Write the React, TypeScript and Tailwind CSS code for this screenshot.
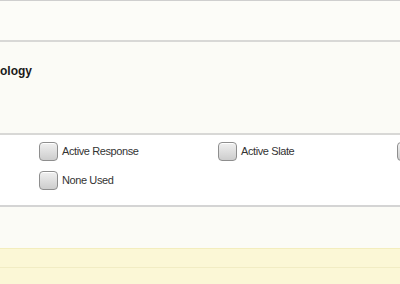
import React from 'react';

const options = [
  ['Active Response', 'Active Slate', ''],
  ['None Used'],
];

function Box() {
  return (
    <span className="block h-[19px] w-[19px] shrink-0 rounded-[4px] border border-[#8e8e8e] bg-gradient-to-b from-[#f0f0f0] to-[#cdcdcd] shadow-[inset_0_1px_0_#fff]" />
  );
}

export default function App() {
  return (
    <div className="h-[284px] w-[400px] overflow-hidden bg-[#fbfbf7] font-['Liberation_Sans',Arial,sans-serif]">
      {/* top strip */}
      <div className="h-[40px] border-t border-[#cfcfcf] bg-[#fcfcf8]" />

      {/* terminology header panel */}
      <div className="h-[95px] border-y-2 border-[#d8d8d6] bg-[#fbfbf6] pt-[21px]">
        <h3 className="text-[12px] font-bold leading-[16px] text-[#1a1a1a]">ology</h3>
      </div>

      {/* checkbox grid */}
      <div className="h-[72px] border-b-2 border-[#d4d4d4] bg-white pl-[39px] pt-[7px]">
        {options.map((row, i) => (
          <div key={i} className="flex h-[29px]">
            {row.map((label, j) => (
              <label key={j} className="flex w-[179px] shrink-0 items-start gap-[4px]">
                <Box />
                {label && (
                  <span className="pt-[2px] text-[11px] leading-[14px] tracking-[-0.4px] whitespace-nowrap text-[#333]">
                    {label}
                  </span>
                )}
              </label>
            ))}
          </div>
        ))}
      </div>

      <div className="h-[41px] bg-[#fbfbf6]" />

      {/* yellow band */}
      <div className="h-[36px] border-t border-[#f3edbd] bg-[#fbf7d6]">
        <div className="mt-[4px] h-[15px] border-b border-[#f1ecc4]" />
      </div>
    </div>
  );
}
